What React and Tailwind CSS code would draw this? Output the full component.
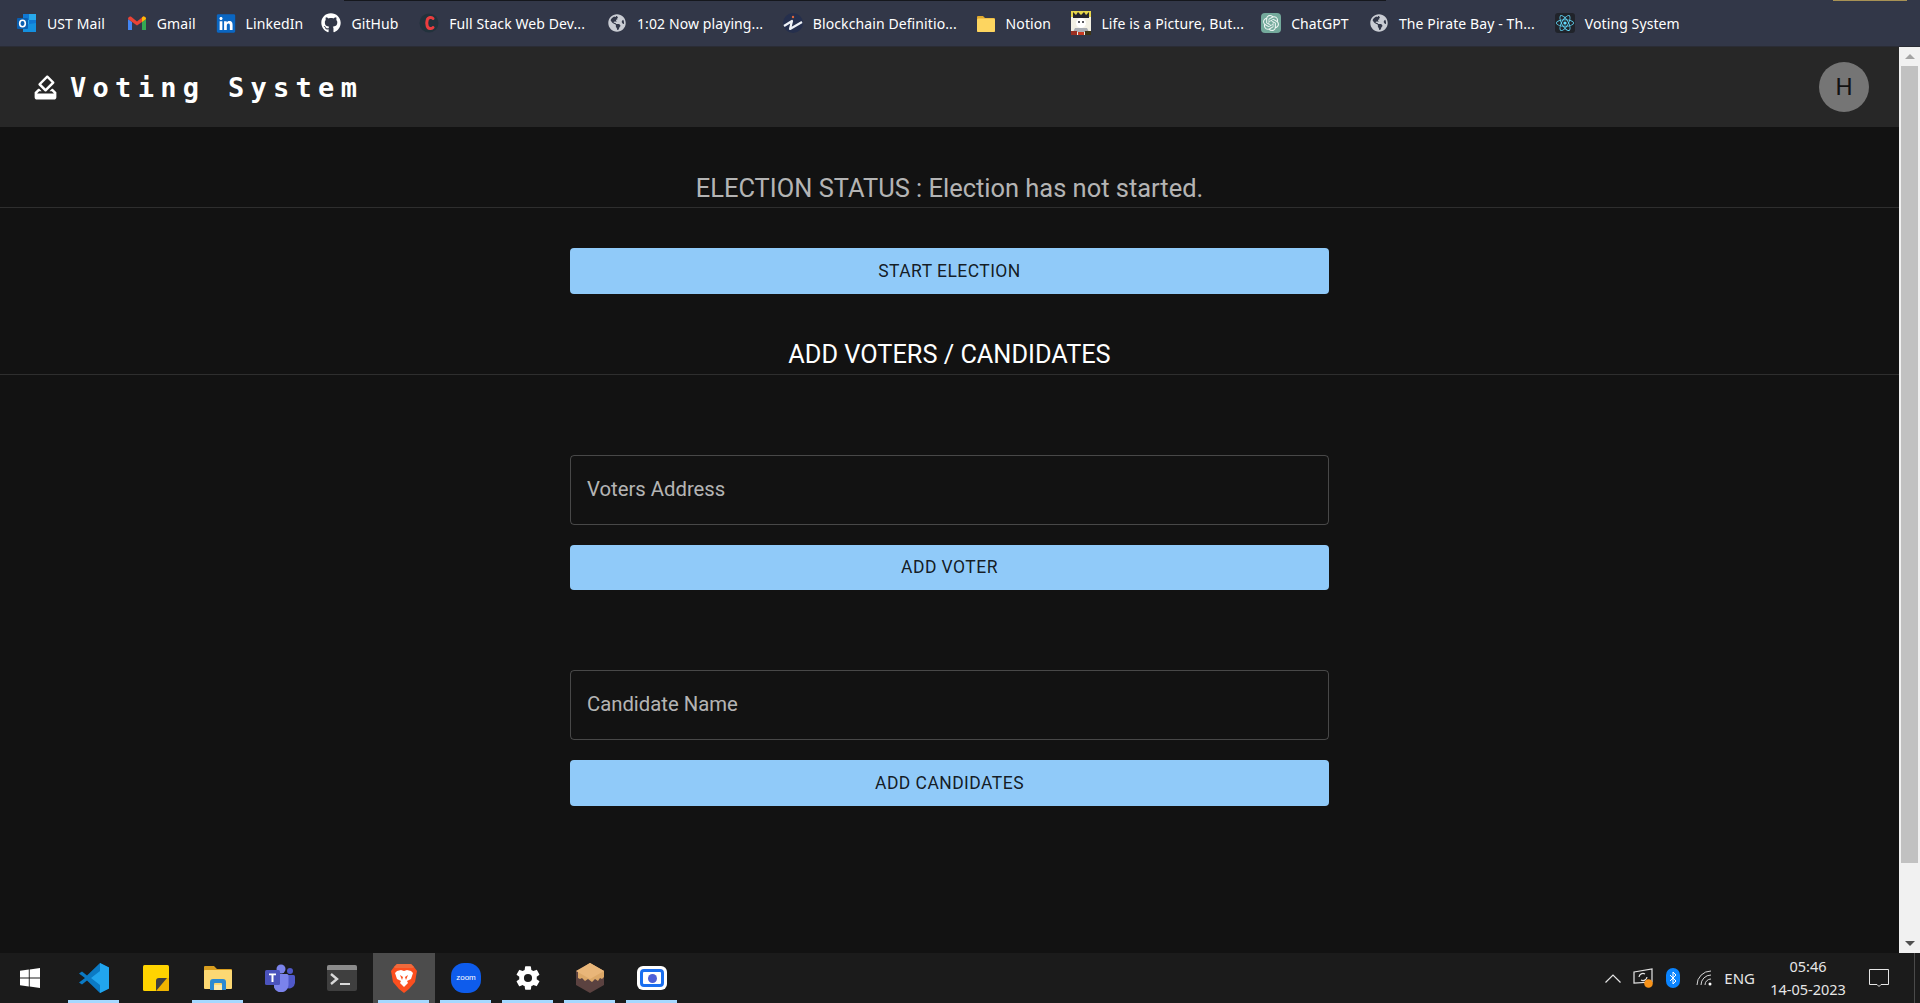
import React from 'react';
import { FaGithub, FaLinkedin, FaReact, FaGlobeAmericas } from 'react-icons/fa';
import { SiOpenai } from 'react-icons/si';
import { IoSettingsSharp } from 'react-icons/io5';

const OutlookIcon = () => (
  <svg width="20" height="20" viewBox="0 0 20 20">
    <rect x="6" y="1" width="13" height="17" fill="#0f78d4" />
    <rect x="12" y="1" width="7" height="6" fill="#28a8ea" />
    <rect x="6" y="7" width="6" height="5" fill="#28a8ea" />
    <path d="M6 12l13-2v9H6z" fill="#1490df" />
    <rect x="0" y="5" width="11" height="11" rx="1" fill="#0a5fb0" />
    <ellipse cx="5.5" cy="10.5" rx="2.8" ry="3.2" fill="none" stroke="#fff" strokeWidth="1.6" />
  </svg>
);

const GmailIcon = () => (
  <svg width="20" height="20" viewBox="0 0 20 20">
    <path d="M1 6v11h4V9z" fill="#4285f4" />
    <path d="M15 9v8h4V6z" fill="#34a853" />
    <path d="M1 6c0-2 2-3 3.5-2L10 8.500v4L1 6z" fill="#ea4335" />
    <path d="M10 8.500l5.500-4.500c1.500-1 3.500 0 3.500 2l-4 3-5 3.500z" fill="#ea4335" />
    <path d="M15 9V4.700l.5-.7c1.500-1 3.500 0 3.500 2z" fill="#fbbc04" />
  </svg>
);

const CourseIcon = () => (
  <svg width="20" height="20" viewBox="0 0 20 20">
    <circle cx="10" cy="10" r="9.500" fill="#22323c" />
    <path d="M14 5.500c-1-1.500-5-1.500-5.800 1.500-.6 2-.6 4 0 6 .8 3 4.800 3 5.800 1.500" fill="none" stroke="#ea3d3f" strokeWidth="3" strokeLinecap="round" />
  </svg>
);

const GlobeIcon = () => (
  <div className="w-5 h-5 flex items-center justify-center">
    <FaGlobeAmericas size={18} color="#c9ccd3" />
  </div>
);

const BlockchainIcon = () => (
  <svg width="20" height="20" viewBox="0 0 20 20">
    <circle cx="10" cy="10" r="10" fill="#252f4d" />
    <path d="M1 13l8-5-2 8 12-7" fill="none" stroke="#eef1f6" strokeWidth="2.200" strokeLinejoin="round" />
    <circle cx="10" cy="4" r="1.200" fill="#e0673c" />
  </svg>
);

const FolderIcon = () => (
  <svg width="20" height="20" viewBox="0 0 20 20">
    <path d="M1 4a1 1 0 011-1h5l2 2h9a1 1 0 011 1v12a1 1 0 01-1 1H2a1 1 0 01-1-1z" fill="#e0a92e" />
    <rect x="1" y="5.500" width="18" height="13.500" rx="1.500" fill="#fdd560" />
  </svg>
);

const PictureIcon = () => (
  <svg width="20" height="24" viewBox="0 0 20 24">
    <rect width="20" height="24" fill="#f2f0e4" />
    <path d="M0 0h20v6H0z" fill="#e7d64a" />
    <path d="M2 1v6h16V1l-3 3-2-3-3 3-3-3-2 3z" fill="#24242c" />
    <circle cx="10" cy="12" r="5" fill="#fff" />
    <circle cx="8" cy="11" r="1" fill="#24242c" />
    <circle cx="12" cy="11" r="1" fill="#24242c" />
    <path d="M4 17h12l2 4H2z" fill="#a9adb3" />
    <path d="M0 20h6v4H0z" fill="#9a2f22" />
    <path d="M14 20h6v4h-6z" fill="#3b3416" />
    <path d="M7 21h6v3H7z" fill="#c83a22" />
  </svg>
);

const ChatGptIcon = () => (
  <div className="w-5 h-5 rounded-[4px] bg-[#74aa9c] flex items-center justify-center">
    <SiOpenai size={16} color="#eef5f3" />
  </div>
);

const ReactIcon = () => (
  <div className="w-5 h-5 rounded-[3px] bg-[#20232a] flex items-center justify-center">
    <FaReact size={18} color="#61dafb" />
  </div>
);

const LinkedinIcon = () => (
  <div className="w-5 h-5 flex items-center justify-center relative">
    <div className="absolute left-[2px] top-[2px] w-4 h-4 bg-white" />
    <FaLinkedin size={21} color="#0a66c2" className="relative" />
  </div>
);

const GithubIcon = () => (
  <div className="w-5 h-5 relative flex items-center justify-center">
    <FaGithub size={20} color="#ffffff" />
  </div>
);

const bookmarks = [
  { label: 'UST Mail', icon: <OutlookIcon />, textClass: 'w-[59px]' },
  { label: 'Gmail', icon: <GmailIcon />, textClass: 'w-[38px]' },
  { label: 'LinkedIn', icon: <LinkedinIcon />, textClass: 'w-[55px]' },
  { label: 'GitHub', icon: <GithubIcon />, textClass: 'w-[47px]' },
  { label: 'Full Stack Web Dev...', icon: <CourseIcon />, textClass: 'w-[137px]' },
  { label: '1:02 Now playing...', icon: <GlobeIcon />, textClass: 'w-[125px]' },
  { label: 'Blockchain Definitio...', icon: <BlockchainIcon />, textClass: 'w-[142px]' },
  { label: 'Notion', icon: <FolderIcon />, textClass: 'w-[45px]' },
  { label: 'Life is a Picture, But...', icon: <PictureIcon />, textClass: 'w-[139px]' },
  { label: 'ChatGPT', icon: <ChatGptIcon />, textClass: 'w-[57px]' },
  { label: 'The Pirate Bay - Th...', icon: <GlobeIcon />, textClass: 'w-[135px]' },
  { label: 'Voting System', icon: <ReactIcon />, textClass: 'w-[94px]' },
];

const BookmarksBar = () => (
  <div className="relative h-[47px] bg-[#323748] border-b border-[#2a2c35] flex items-center pl-[17px] gap-[20.8px] shrink-0">
    <div className="absolute top-0 left-[344px] w-[1042px] h-[1px] bg-[#15171d]" />
    <div className="absolute top-0 right-[13px] w-[74px] h-[1px] bg-[#a89255]" />
    {bookmarks.map((bookmark) => (
      <div key={bookmark.label} className="flex items-center gap-[10px]">
        <div className="w-5 flex items-center justify-center">{bookmark.icon}</div>
        <span className={`${bookmark.textClass} whitespace-nowrap text-[14px] tracking-[0.1px] text-white font-['Noto_Sans',sans-serif]`}>
          {bookmark.label}
        </span>
      </div>
    ))}
  </div>
);

const VoteIcon = () => (
  <svg width="29" height="29" viewBox="0 0 24 24" fill="#ffffff">
    <path d="M18 13h-.68l-2 2h1.91L19 17H5l1.78-2h2.05l-2-2H6l-3 3v4c0 1.100.89 2 1.990 2H19c1.100 0 2-.89 2-2v-4l-3-3zm-1-5.050l-4.950 4.950-3.540-3.540 4.950-4.950L17 7.950zm-4.240-5.660L6.390 8.660c-.39.39-.39 1.020 0 1.410l4.950 4.950c.39.39 1.020.39 1.410 0l6.360-6.360c.39-.39.39-1.020 0-1.410L14.160 2.300c-.38-.4-1.010-.4-1.400-.01z" />
  </svg>
);

const Header = () => (
  <header className="h-[80px] bg-[#272727] flex items-center justify-between pl-[31px] pr-[30px] shrink-0 shadow-[0_2px_4px_rgba(0,0,0,0.3)]">
    <div className="flex items-center gap-[10px]">
      <VoteIcon />
      <span className="mt-[2px] text-white font-bold text-[27px] tracking-[6.300px] whitespace-pre font-['DejaVu_Sans_Mono',monospace]">
        Voting System
      </span>
    </div>
    <div className="w-[50px] h-[50px] rounded-full bg-[#757575] flex items-center justify-center text-[24px] text-[#121212] font-['Roboto',sans-serif]">
      H
    </div>
  </header>
);

const PrimaryButton = ({ children, height = 'h-[45px]' }) => (
  <button className={`w-full ${height} rounded-[4px] bg-[#90caf9] text-[rgba(0,0,0,0.87)] text-[17.500px] tracking-[0.45px] uppercase font-['Roboto',sans-serif]`}>
    {children}
  </button>
);

const TextField = ({ label }) => (
  <div className="h-[70px] w-full rounded-[4px] border border-[rgba(255,255,255,0.23)] flex items-center px-[16px] pb-[1px] text-[20.300px] text-[rgba(255,255,255,0.7)] font-['Roboto',sans-serif]">
    {label}
  </div>
);

const Page = () => (
  <main className="flex-1 bg-[#121212] font-['Roboto',sans-serif]">
    <div className="pt-[45px] pb-[3px] border-b border-[rgba(255,255,255,0.12)] text-center text-[25.450px] leading-[32px] text-[rgba(255,255,255,0.7)]">
      ELECTION STATUS : Election has not started.
    </div>
    <div className="w-[759px] mx-auto mt-10">
      <PrimaryButton height="h-[46px]">Start Election</PrimaryButton>
    </div>
    <div className="mt-[45px] pb-[3px] border-b border-[rgba(255,255,255,0.12)] text-center text-[25.300px] leading-[32px] text-white">
      ADD VOTERS / CANDIDATES
    </div>
    <div className="w-[759px] mx-auto mt-20 flex flex-col gap-5">
      <TextField label="Voters Address" />
      <PrimaryButton>Add Voter</PrimaryButton>
    </div>
    <div className="w-[759px] mx-auto mt-20 flex flex-col gap-5">
      <TextField label="Candidate Name" />
      <PrimaryButton height="h-[46px]">Add Candidates</PrimaryButton>
    </div>
  </main>
);

const Scrollbar = () => (
  <div className="w-[21px] bg-[#f1f1f1] flex flex-col shrink-0">
    <div className="h-[19px] flex items-center justify-center">
      <div className="w-0 h-0 border-x-[5px] border-x-transparent border-b-[5px] border-b-[#a3a3a3]" />
    </div>
    <div className="h-[797px] mx-[2px] bg-[#c1c1c1]" />
    <div className="flex-1 flex items-end justify-center pb-[7px]">
      <div className="w-0 h-0 border-x-[5px] border-x-transparent border-t-[5px] border-t-[#505050]" />
    </div>
  </div>
);

const VsCodeIcon = () => (
  <svg width="30" height="30" viewBox="0 0 30 30">
    <path d="M21 0l9 4.500v21L21 30 8 17.500l-5 4L0 19.500 6 15 0 10.500 3 8.500l5 4z" fill="#0b7ac4" />
    <path d="M21 0l9 4.500v21L21 30zM21 8l-9 7 9 7z" fill="#21a5ee" fillRule="evenodd" />
  </svg>
);

const StickyIcon = () => (
  <svg width="26" height="26" viewBox="0 0 26 26">
    <rect width="26" height="26" rx="1.500" fill="#ffd400" />
    <path d="M13 26V16a3 3 0 013-3h10v11.500a1.500 1.500 0 01-1.500 1.500z" fill="#f0b400" />
    <path d="M13 26V16a3 3 0 013-3h8z" fill="#3f3f3f" />
  </svg>
);

const ExplorerIcon = () => (
  <svg width="28" height="26" viewBox="0 0 28 26">
    <path d="M0 2a1 1 0 011-1h9l3 3h14a1 1 0 011 1v18H0z" fill="#d99e1f" />
    <rect y="5" width="28" height="19" rx="1" fill="#fcd873" />
    <path d="M6 25v-8a3 3 0 013-3h10a3 3 0 013 3v8h-4v-6a1 1 0 00-1-1h-6a1 1 0 00-1 1v6z" fill="#2b8ad1" />
    <rect x="10" y="20" width="8" height="5" fill="#fce9a8" />
  </svg>
);

const TeamsIcon = () => (
  <svg width="30" height="28" viewBox="0 0 30 28">
    <circle cx="16" cy="5" r="4.500" fill="#7b83eb" />
    <circle cx="25" cy="7" r="3" fill="#5059c9" />
    <path d="M20 11h8.500a1.500 1.500 0 011.500 1.500V19a6 6 0 01-8 5z" fill="#5059c9" />
    <path d="M9 10h13a1.500 1.500 0 011.500 1.500V21a7.500 7.500 0 01-14.500 2.500z" fill="#7b83eb" />
    <rect y="6" width="15" height="15" rx="1.500" fill="#4b53bc" />
    <path d="M4 9.500h7v1.800H8.500V18h-2v-6.700H4z" fill="#fff" />
  </svg>
);

const TerminalIcon = () => (
  <svg width="30" height="26" viewBox="0 0 30 26">
    <rect width="30" height="26" rx="2" fill="#3f3f3f" />
    <path d="M0 2a2 2 0 012-2h26a2 2 0 012 2v3H0z" fill="#8b8b8b" />
    <path d="M4 9l6 5-6 5" fill="none" stroke="#d9d9d9" strokeWidth="2.400" />
    <rect x="13" y="18" width="10" height="2" fill="#d9d9d9" />
  </svg>
);

const BraveIcon = () => (
  <svg width="26" height="30" viewBox="0 0 26 30">
    <path d="M6 1h14l3 3 3 4-2 11-6 7-5 4-5-4-6-7L0 8l3-4z" fill="#fb4f1f" />
    <path d="M6 1h14l3 3-1 1H4L3 4z" fill="#ef6a3c" />
    <path d="M6 8l4-1 3 1 3-1 4 1 2 2-2 6-4 2 1 2-4 4-4-4 1-2-4-2-2-6z" fill="#fff" />
    <path d="M9 12l3 2-1 3zM17 12l-3 2 1 3z" fill="#fb4f1f" />
  </svg>
);

const ZoomIcon = () => (
  <div className="w-[30px] h-[30px] rounded-[13px] bg-[#0e5cec] flex items-center justify-center text-[8px] text-white font-['Liberation_Sans',sans-serif]">
    zoom
  </div>
);

const BoxIcon = () => (
  <svg width="28" height="30" viewBox="0 0 28 30">
    <path d="M14 0l14 8v14l-14 8-14-8V8z" fill="#5b4240" />
    <path d="M14 0l14 8v6l-2 2-2-1-2 3-3-2-3 3-4-3-3 2-3-3-2 1-2-1V8z" fill="#dca868" />
    <path d="M14 0l14 8-14 8L0 8z" fill="#e9b679" />
  </svg>
);

const RecordIcon = () => (
  <div className="w-[30px] h-[24px] rounded-[6px] bg-white flex items-center justify-center">
    <div className="w-[24px] h-[18px] rounded-[4px] bg-white border-[3px] border-[#1a6ff0] flex items-center justify-center">
      <div className="w-[9px] h-[9px] rounded-full bg-[#4f5fd6]" />
    </div>
  </div>
);

const WindowsIcon = () => (
  <svg width="20" height="20" viewBox="0 0 20 20" fill="#fff">
    <path d="M0 2.800l8.800-1.300v8H0zM9.700 1.400L20 0v9.500H9.700zM0 10.500h8.800v8L0 17.200zM9.700 10.500H20V20L9.700 18.600z" />
  </svg>
);

const taskbarApps = [
  { name: 'code', icon: <VsCodeIcon />, running: true },
  { name: 'sticky', icon: <StickyIcon />, running: false },
  { name: 'explorer', icon: <ExplorerIcon />, running: true },
  { name: 'teams', icon: <TeamsIcon />, running: false },
  { name: 'terminal', icon: <TerminalIcon />, running: false },
  { name: 'brave', icon: <BraveIcon />, running: true, active: true },
  { name: 'zoom', icon: <ZoomIcon />, running: true },
  { name: 'settings', icon: <IoSettingsSharp size={26} color="#fff" />, running: true },
  { name: 'box', icon: <BoxIcon />, running: true },
  { name: 'record', icon: <RecordIcon />, running: true },
];

const Tray = () => (
  <div className="ml-auto h-full flex items-center text-[#e6e6e6] font-['Noto_Sans',sans-serif]">
    <svg width="16" height="9" viewBox="0 0 16 9" className="mr-[12px]">
      <path d="M0.500 8.500L8 1l7.500 7.500" fill="none" stroke="#e6e6e6" strokeWidth="1.200" />
    </svg>
    <svg width="20" height="20" viewBox="0 0 20 20" className="mr-[13px]">
      <path d="M1 4l18-3v13l-18 1z" fill="none" stroke="#e6e6e6" strokeWidth="1.200" />
      <path d="M6 9a4 4 0 016-3M14 9a4 4 0 01-6 3" fill="none" stroke="#e6e6e6" strokeWidth="1.200" />
      <circle cx="15.500" cy="15.500" r="4.300" fill="#f7931a" />
    </svg>
    <div className="w-[14px] h-[20px] rounded-[7px] bg-[#0a84ff] flex items-center justify-center mr-[16px]">
      <svg width="8" height="14" viewBox="0 0 8 14">
        <path d="M1 4l6 6-3 3V1l3 3-6 6" fill="none" stroke="#fff" strokeWidth="1" />
      </svg>
    </div>
    <svg width="16" height="16" viewBox="0 0 16 16" className="mr-[12px]">
      <path d="M1 15a14 14 0 0114-14M5 15a10 10 0 0110-10M9 15a6 6 0 016-6" fill="none" stroke="#d6d6d6" strokeWidth="1" />
      <circle cx="14" cy="14" r="1.500" fill="#fff" />
    </svg>
    <span className="text-[15px] mr-[11px]">ENG</span>
    <div className="w-[84px] flex flex-col items-center text-[14.500px] leading-[23px] mr-[19px]">
      <span>05:46</span>
      <span>14-05-2023</span>
    </div>
    <svg width="20" height="20" viewBox="0 0 20 20" className="mr-[31px]">
      <path d="M0.500 1.500h19v15H12l-2 2-2-2H0.500z" fill="none" stroke="#e6e6e6" strokeWidth="1" />
    </svg>
  </div>
);

const Taskbar = () => (
  <footer className="relative h-[50px] bg-[#1b1b1b] flex shrink-0">
    <div className="w-[63px] flex items-center justify-center pr-[3px]">
      <WindowsIcon />
    </div>
    {taskbarApps.map((app) => (
      <div
        key={app.name}
        className={`relative w-[62px] h-full flex items-center justify-center ${app.active ? 'bg-[#4c4c4c]' : ''}`}
      >
        {app.icon}
        {app.running && (
          <div className="absolute bottom-0 left-[5px] right-[6px] h-[3px] bg-[#a6d8ff]" />
        )}
      </div>
    ))}
    <Tray />
    <div className="absolute right-[5px] top-0 bottom-0 w-[1px] bg-[#4a4a4a]" />
  </footer>
);

const App = () => {
  return (
    <div className="w-full h-screen flex flex-col overflow-hidden bg-[#121212]">
      <BookmarksBar />
      <div className="flex-1 flex min-h-0">
        <div className="flex-1 flex flex-col min-w-0">
          <Header />
          <Page />
        </div>
        <Scrollbar />
      </div>
      <Taskbar />
    </div>
  );
};

export default App;
